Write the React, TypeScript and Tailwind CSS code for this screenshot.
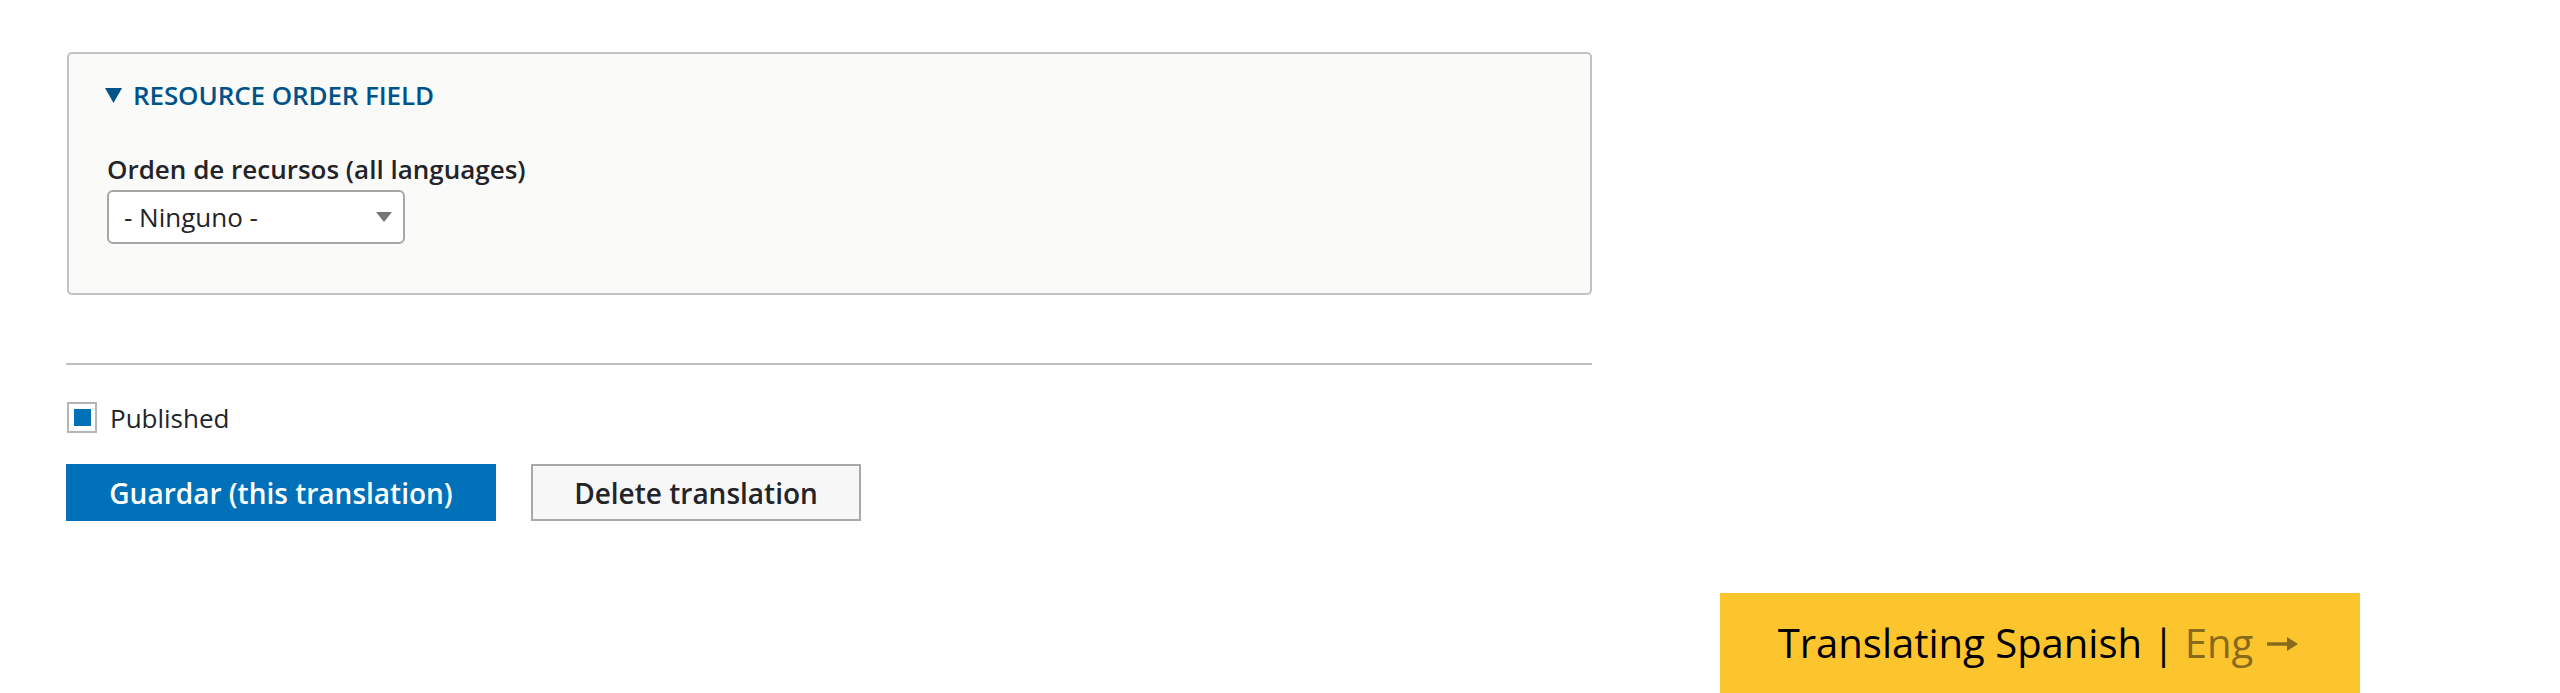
export default function App() {
  return (
    <div
      className="relative w-full h-[693px] overflow-hidden bg-white text-[#232429]"
      style={{ fontFamily: '"Open Sans", "Noto Sans", sans-serif' }}
    >
      <div className="pl-[66px] pt-[52px] w-[1592px]">
        {/* resource order details */}
        <div className="ml-px w-[1525px] h-[243px] border-2 border-[#c2c2c2] rounded-[5px] bg-[#fafaf9] pt-[24px] pl-[38px]">
          <div className="flex items-center h-[34px]">
            <svg width="17" height="15" viewBox="0 0 17 15" className="-ml-[2px] mr-[11px]">
              <polygon points="0,0 17,0 8.5,15" fill="#00538a" />
            </svg>
            <span className="text-[26px] leading-[34px] font-semibold tracking-[-0.1px] text-[#00538a]">
              RESOURCE ORDER FIELD
            </span>
          </div>
          <div className="mt-[40px] text-[26px] leading-[34px] font-semibold">
            Orden de recursos (all languages)
          </div>
          <div className="mt-[4px] flex items-center justify-between w-[298px] h-[54px] border-2 border-[#a6a6a6] rounded-[6px] bg-white pl-[15px] pr-[11px]">
            <span className="text-[26px] leading-[34px]">- Ninguno -</span>
            <svg width="16" height="10" viewBox="0 0 16 10">
              <polygon points="0,0 16,0 8,10" fill="#767676" />
            </svg>
          </div>
        </div>

        <div className="mt-[68px] h-[2px] bg-[#bfbfbf]" />

        <label className="mt-[37px] flex items-center h-[31px]">
          <span className="ml-px flex items-center justify-center w-[30px] h-[31px] border-2 border-[#b5b5b5] bg-white">
            <span className="w-[17px] h-[17px] bg-[#0071b8]" />
          </span>
          <span className="ml-[13px] text-[26px] leading-[34px]">Published</span>
        </label>

        <div className="mt-[31px] flex gap-[35px]">
          <button className="w-[430px] h-[57px] bg-[#0071b8] text-white text-[28px] font-semibold">
            Guardar (this translation)
          </button>
          <button className="w-[330px] h-[57px] border-2 border-[#a8a8a8] bg-[#f7f7f7] text-[28px] font-semibold text-[#232429]">
            Delete translation
          </button>
        </div>
      </div>

      {/* floating language tab */}
      <div className="absolute left-[1720px] top-[593px] w-[640px] h-[100px] bg-[#fdc52d] flex items-center justify-center pr-[4px]">
        <span className="text-[40px] leading-[56px] text-black whitespace-pre">
          Translating Spanish | <span className="text-[#876a1e]">Eng</span>
        </span>
        <svg width="31" height="16" viewBox="0 0 31 16" className="ml-[14px] mt-[2px]">
          <path d="M0 8 H24" stroke="#876a1e" strokeWidth="3.5" />
          <polygon points="20,1 31,8 20,15" fill="#876a1e" />
        </svg>
      </div>
    </div>
  )
}
